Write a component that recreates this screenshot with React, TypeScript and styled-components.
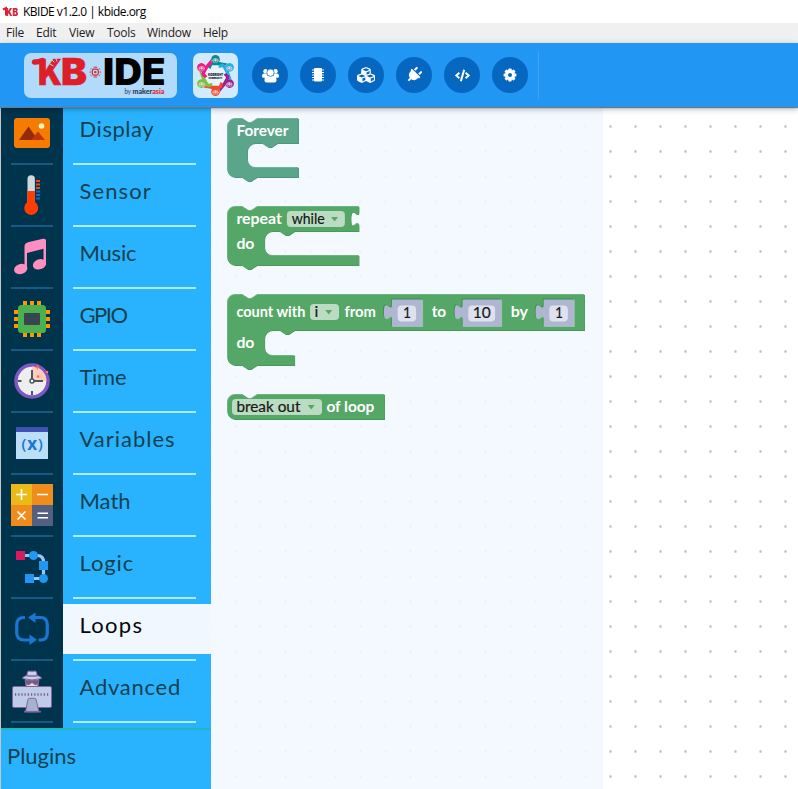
import React from 'react';
import styled, { createGlobalStyle } from 'styled-components';
import { FaCubes, FaPlug, FaCode } from 'react-icons/fa';

const GlobalStyle = createGlobalStyle`
  * { box-sizing: border-box; }
  body { margin: 0; background: #fff; overflow: hidden; }
  svg { display: block; overflow: visible; }
  svg text { white-space: pre; }
`;

const Window = styled.div`
  width: 798px;
  height: 789px;
  display: flex;
  flex-direction: column;
  font-family: Lato, sans-serif;
`;

const TitleBar = styled.div`
  flex: none;
  height: 23px;
  display: flex;
  align-items: center;
  gap: 5px;
  padding: 1px 0 0 3px;
  background: #fff;
  color: #000;
`;

const MenuBar = styled.nav`
  flex: none;
  height: 20px;
  display: grid;
  grid-template-columns: 30px 33px 38px 40px 56px 40px;
  align-items: center;
  padding-left: 6px;
  background: #f0f0f0;
  color: #222;
`;

const UiText = styled.span<{ $spacing?: number }>`
  font: 12px/18px 'Open Sans', 'Noto Sans', sans-serif;
  letter-spacing: ${p => p.$spacing ?? 0}px;
  white-space: nowrap;
`;

const Header = styled.header`
  flex: none;
  position: relative;
  z-index: 1;
  height: 64px;
  display: flex;
  align-items: center;
  padding-left: 24px;
  background: #2196f3;
  box-shadow: 0 1px 1px rgba(0, 0, 0, 0.42), 0 2px 6px rgba(0, 0, 0, 0.3);
`;

const LogoPlate = styled.div<{ $width: number; $alpha: number }>`
  width: ${p => p.$width}px;
  height: 45px;
  margin-right: 16px;
  border-radius: 7px;
  background: rgba(255, 255, 255, ${p => p.$alpha});
`;

const Tools = styled.div`
  display: flex;
  gap: 12px;
  margin-left: -2px;
`;

const ToolButton = styled.button`
  width: 36px;
  height: 36px;
  padding: 0;
  border: 0;
  border-radius: 50%;
  display: grid;
  place-items: center;
  background: #0567bf;
  color: #fff;
`;

const HeaderDivider = styled.div`
  width: 1px;
  height: 48px;
  margin-left: 10px;
  background: #46a2ef;
`;

const Body = styled.div`
  flex: 1;
  min-height: 0;
  display: flex;
  padding-top: 1px;
  border-left: 1px solid #c4c6c8;
`;

const Sidebar = styled.aside`
  width: 210px;
  display: flex;
  flex-direction: column;
  background: #29b3ff;
`;

const Category = styled.div`
  height: 62px;
  display: flex;
`;

const IconCell = styled.div`
  width: 62px;
  background: #00344d;
  display: flex;
  flex-direction: column;
  align-items: center;
`;

const IconHolder = styled.div`
  height: 55px;
  width: 62px;
  padding-top: 4px;
  display: flex;
  justify-content: center;
`;

const IconRule = styled.div`
  width: 42px;
  height: 2px;
  background: #165a83;
`;

const LabelCell = styled.div`
  flex: 1;
`;

const Label = styled.div<{ $active?: boolean; $spacing: number }>`
  height: 50px;
  padding: 5px 0 0 16.5px;
  font-size: 22px;
  line-height: 32px;
  white-space: nowrap;
  letter-spacing: ${p => p.$spacing}px;
  color: ${p => (p.$active ? '#05080b' : '#15414f')};
  background: ${p => (p.$active ? '#f0f7ff' : 'transparent')};
`;

const LabelRule = styled.div`
  width: 123px;
  height: 2px;
  margin: 5px 0 0 10px;
  background: #b0ecff;
`;

const Plugins = styled.div`
  flex: 1;
  border-top: 2px solid #24b6bf;
  padding: 10px 0 0 6px;
  font-size: 22px;
  line-height: 32px;
  color: #15414f;
`;

const Workspace = styled.main`
  flex: 1;
  display: flex;
  background-color: #fff;
  background-image: radial-gradient(ellipse 1.7px 2.1px at 12.5px 12.5px, #bcbcbc 0, #d4d4d4 55%, transparent 100%);
  background-size: 25px 25px;
  background-position: 12px 6px;
`;

const Flyout = styled.div`
  width: 392px;
  padding: 10px 0 0 16px;
  display: flex;
  flex-direction: column;
  gap: 24px;
  background: rgba(242, 247, 255, 0.86);
`;

const BlockSvg = styled.svg`
  flex: none;
  overflow: visible;
  font-family: Lato, sans-serif;
`;

const GREEN = '#55a767';
const TEAL = '#5ba58b';

type TxtProps = { x: number; y: number; w: number; children: string; dark?: boolean; size?: number };
const Txt = ({ x, y, w, children, dark, size = 14.5 }: TxtProps) => (
  <text x={x} y={y} textLength={w} lengthAdjust="spacingAndGlyphs" fontSize={size}
    fontWeight={dark ? 400 : 700} fill={dark ? '#151a18' : '#fff'}
    stroke={dark ? '#151a18' : 'none'} strokeWidth={dark ? 0.2 : 0}>
    {children}
  </text>
);

const Body3D = ({ d, fill, light, dark }: { d: string; fill: string; light: string; dark: string }) => (
  <>
    <path d={d} fill={dark} transform="translate(.5 .5)" />
    <path d={d} fill={light} transform="translate(-.4 -.4)" />
    <path d={d} fill={fill} transform="translate(.1 .2)" />
  </>
);

const Green = ({ d }: { d: string }) => <Body3D d={d} fill={GREEN} light="#88c295" dark="#3c8a4e" />;

const Dropdown = ({ x, y, w, arrow }: { x: number; y: number; w: number; arrow: number }) => (
  <>
    <rect x={x} y={y} width={w} height={16} rx={4} fill="#bbdcc2" />
    <path d={`M${arrow} ${y + 6}h7l-3.5 4.6z`} fill={GREEN} />
  </>
);

const NumberBlock = ({ x, w, text, tx, tw }: { x: number; w: number; text: string; tx: number; tw: number }) => {
  const d = `M${x} 5H${x + w}V32H${x}V25c0-10-8 8-8-7.5s8 2.5 8-7.5z`;
  return (
    <>
      <path d={d} fill="#3c8a4e" transform="translate(-.8 -.8)" />
      <path d={d} fill="#91c79c" transform="translate(.7 .7)" />
      <path d={d} fill="#afb6d2" />
      <rect x={x + 5.7} y={11} width={w - 12} height={16} rx={4} fill="#dfe2ee" />
      <Txt x={tx} y={23.6} w={tw} dark>{text}</Txt>
    </>
  );
};

const NOTCH_TOP = 'M0 8A8 8 0 0 1 8 0H15l6 4h3l6-4';
const FOOT = 'H29.5l-6 4h-3l-6-4H8a8 8 0 0 1-8-8z';
const mouth = (x: number, h: number) => `H${x + 30}l-6 4h-3l-6-4h-7a8 8 0 0 0-8 8v${h - 16}a8 8 0 0 0 8 8`;

const ForeverBlock = () => (
  <BlockSvg width={72} height={64}>
    <g transform="translate(.4 .4)">
      <Body3D fill={TEAL} light="#8cc0ae" dark="#3f8870"
        d={`${NOTCH_TOP}H71V25${mouth(20, 24)}H71V59${FOOT}`} />
      <Txt x={9} y={17.6} w={52}>Forever</Txt>
    </g>
  </BlockSvg>
);

const RepeatBlock = () => (
  <BlockSvg width={133} height={64}>
    <g transform="translate(.4 .4)">
      <Green d={`${NOTCH_TOP}H131.5v5c0 10-8-8-8 7.5s8-2.5 8 7.5V25${mouth(37.2, 24)}H131.5V59${FOOT}`} />
      <Txt x={9} y={17.6} w={45.5}>repeat</Txt>
      <Dropdown x={59.5} y={4.6} w={58} arrow={103.7} />
      <Txt x={64.3} y={17.6} w={33} dark>while</Txt>
      <Txt x={9} y={42.6} w={18}>do</Txt>
    </g>
  </BlockSvg>
);

const CountBlock = () => (
  <BlockSvg width={358} height={76}>
    <g transform="translate(.4 .4)">
      <Green d={`${NOTCH_TOP}H357V36${mouth(37.2, 25)}H67.2V71${FOOT}`} />
      <Txt x={9} y={22.9} w={69}>count with</Txt>
      <Dropdown x={82.6} y={9.6} w={29} arrow={97.8} />
      <Txt x={87.2} y={22.9} w={3.8} dark>i</Txt>
      <Txt x={117} y={22.9} w={31.5}>from</Txt>
      <NumberBlock x={164.5} w={30.5} text="1" tx={175.5} tw={8} />
      <Txt x={204.3} y={22.9} w={14.5}>to</Txt>
      <NumberBlock x={235.2} w={38.8} text="10" tx={245.3} tw={18} />
      <Txt x={283.3} y={22.9} w={17.3}>by</Txt>
      <NumberBlock x={316.2} w={30.5} text="1" tx={327.5} tw={8} />
      <Txt x={9} y={53.9} w={18}>do</Txt>
    </g>
  </BlockSvg>
);

const BreakBlock = () => (
  <BlockSvg width={158} height={26}>
    <g transform="translate(.4 .4)">
      <Green d={`${NOTCH_TOP}H157V25H8a8 8 0 0 1-8-8z`} />
      <Dropdown x={4.6} y={4.6} w={90} arrow={80.3} />
      <Txt x={9} y={17.6} w={64} dark>break out</Txt>
      <Txt x={99} y={17.6} w={48}>of loop</Txt>
    </g>
  </BlockSvg>
);

const AppIcon = () => (
  <svg width="15" height="12" fill="#d8232f" fontFamily="Inter, sans-serif" fontWeight="900" fontSize="10">
    <path d="M0 3.5L3 2V9.5" fill="none" stroke="#d8232f" strokeWidth="2" />
    <text x="3" y="9.5" textLength="12" lengthAdjust="spacingAndGlyphs">KB</text>
  </svg>
);

const KbLogo = () => (
  <svg width="153" height="45" fontFamily="Inter, sans-serif" fontWeight="900">
    <g fill="#de1f2a" stroke="#de1f2a">
      <path d="M10.500 9q4 .3 8-1.500v21.500" fill="none" strokeWidth="5.500" strokeLinejoin="round" strokeLinecap="round" />
      <text x="14" y="31.500" fontSize="36" strokeWidth=".4" textLength="24" lengthAdjust="spacingAndGlyphs">K</text>
      <text x="37" y="31.500" fontSize="36.500" strokeWidth=".4" textLength="26" lengthAdjust="spacingAndGlyphs">B</text>
    </g>
    <path d="M27.500 6.500l3 3m1-5l1.500 4m-7 2.500l3.500 2" stroke="#b3dbfb" strokeWidth="1" />
    <g fill="none" stroke="#de1f2a">
      <rect x="68.300" y="16.100" width="6" height="6" rx="1.800" strokeWidth="1.200" />
      <path d="M65.500 19.100h1.500m8.600 0h1.500M69.500 14.200h3.600M69.500 24h3.600" strokeWidth=".9" />
      <path d="M66.500 16.500l1-1.500M76 16.500l-1-1.500M66.500 21.700l1 1.500M76 21.700l-1 1.500" strokeWidth=".7" />
    </g>
    <circle cx="71.300" cy="19.100" r="1.200" fill="#de1f2a" />
    <text x="79" y="31.500" fontSize="36.500" textLength="62.500" lengthAdjust="spacingAndGlyphs">IDE</text>
    <g fontFamily="Lato, sans-serif" fontSize="7.500" fill="#253b55">
      <text x="100.500" y="41" fontWeight="400" textLength="6.500" lengthAdjust="spacingAndGlyphs">by</text>
      <text x="108.500" y="41" textLength="32" lengthAdjust="spacingAndGlyphs">
        maker<tspan fill="#de1f2a">asia</tspan>
      </text>
    </g>
  </svg>
);

const PEOPLE: [number, string][] = [
  [0, '#0b8793'], [60, '#2aaee2'], [120, '#9b2191'], [180, '#f0482c'], [240, '#7cc142'], [300, '#ee1a86'],
];

const CommunityLogo = () => (
  <svg width="45" height="45">
    <circle cx="22.500" cy="22.500" r="11" fill="#e7f3fb" />
    {PEOPLE.map(([angle, color]) => (
      <g key={angle} transform={`translate(22.500 22.500) rotate(${angle})`}>
        <path d="M-6.500-12.500Q0-15 6-13L12-12 8-8.500 5-10.200H-3.500L-5-6.500-7.500-8z" fill={color} />
        <circle cy="-16.300" r="4.300" fill={color} />
        <g transform={`translate(0 -16) rotate(${-angle})`}>
          <ellipse cy=".9" rx="3" ry="2.200" fill="#f3e3dc" opacity=".85" />
          <path d="M-2.200 1.500Q0 3.500 2.200 1.500M-2 .3h1.200m1.600 0H2" stroke={color} strokeWidth=".9" fill="none" />
        </g>
      </g>
    ))}
    <g fontFamily="Inter, sans-serif" fontWeight="900" fill="#17212b">
      <text x="15" y="22.500" fontSize="4" textLength="15" lengthAdjust="spacingAndGlyphs">KIDBRIGHT</text>
      <text x="15.500" y="25.600" fontSize="2.600" textLength="14" lengthAdjust="spacingAndGlyphs">COMMUNITY</text>
    </g>
  </svg>
);

const UsersGlyph = () => (
  <svg width="17" height="15" fill="#fff">
    <circle cx="3.500" cy="3.200" r="2.200" />
    <circle cx="13.500" cy="3.200" r="2.200" />
    <path d="M0 8.500Q0 5.500 2 5.500h3v4.300H1.500Q0 9.800 0 8.500zM17 8.500q0-3-2-3h-3v4.300h3.500q1.500 0 1.500-1.300z" />
    <path d="M2.500 12.500Q2.500 7.500 5.500 7.500h6q3 0 3 5 0 2-2 2h-8q-2 0-2-2z" />
    <circle cx="8.500" cy="4.700" r="3.700" stroke="#0567bf" strokeWidth=".7" />
  </svg>
);

const ChipGlyph = () => (
  <svg width="14" height="14" fill="#fff">
    <rect x="3" y="0" width="8" height="13.500" rx="1" />
    <path d="M1 2h12M1 4.500h12M1 7h12M1 9.500h12M1 12h12" stroke="#fff" strokeWidth="1" />
  </svg>
);

const PlugGlyph = styled(FaPlug)`
  transform: rotate(45deg);
`;

const GearGlyph = () => (
  <svg width="14" height="14" viewBox="-7 -7 14 14">
    <g fill="#fff">
      <circle r="5" />
      {[0, 45, 90, 135].map(a => (
        <rect key={a} x="-1.600" y="-6.400" width="3.200" height="12.800" rx=".7" transform={`rotate(${a})`} />
      ))}
    </g>
    <circle r="2" fill="#0567bf" />
  </svg>
);

const DisplayIcon = () => (
  <svg width="42" height="42">
    <rect x="3" y="6" width="36" height="30" rx="3" fill="#f57c00" />
    <circle cx="30.500" cy="14" r="2.800" fill="#fff6c4" />
    <path d="M17.500 14.500L27 28H8z" fill="#942a09" />
    <path d="M27 19.500L34 28H20z" fill="#bf360c" />
  </svg>
);

const SensorIcon = () => (
  <svg width="42" height="42">
    <path d="M16.500 30V5a3.700 3.700 0 0 1 7.400 0v25z" fill="#cfd8dc" />
    <path d="M16.500 17h7.400v11a7 7 0 1 1-7.400 0z" fill="#ff3d00" />
    <path d="M25 7h4M25 10.500h4M25 14h4" stroke="#e64a19" strokeWidth="2" />
    <path d="M25 17.500h4M25 21h4M25 24.500h4" stroke="#1565c0" strokeWidth="2" />
  </svg>
);

const MusicIcon = () => (
  <svg width="42" height="42">
    <g fill="#ff8fc0" transform="translate(0 1.300)">
      <ellipse cx="9.700" cy="31.700" rx="6.800" ry="5" transform="rotate(-18 9.700 31.700)" />
      <ellipse cx="28.500" cy="27" rx="6.800" ry="5" transform="rotate(-18 28.500 27)" />
      <path d="M13.500 9Q13.500 6 17 5L32 1.500q3-.7 3 2V27h-2.500V11.500L16 15.800V31h-2.500z" />
    </g>
  </svg>
);

const GpioIcon = () => (
  <svg width="42" height="42">
    <path d="M14 3v36M21 3v36M28 3v36M3 14h36M3 21h36M3 28h36" stroke="#ff9800" strokeWidth="4" />
    <rect x="7" y="7" width="28" height="28" rx="3.500" fill="#4caf50" />
    <rect x="13" y="15" width="16" height="12" rx="1" fill="#37474f" />
  </svg>
);

const TimeIcon = () => (
  <svg width="42" height="42">
    <circle cx="21" cy="21" r="16" fill="#eee" stroke="#7e57c2" strokeWidth="3.500" />
    <path d="M21 21V6.500A14.500 14.500 0 0 1 35.500 21z" fill="#ffccbc" />
    <path d="M21 19V10M23 21h9M21 31v4M7 21h3.500" stroke="#455a64" strokeWidth="2" />
    <circle cx="21" cy="21" r="2" fill="#fff" stroke="#455a64" strokeWidth="1.500" />
    <circle cx="27" cy="16.500" r="1.300" fill="#ff7058" />
    <circle cx="36" cy="12" r="1.300" fill="#ff7058" />
    <path d="M26.500 4.500l.8 2 2 .8-2 .8-.8 2-.8-2-2-.8 2-.8z" fill="#ff7058" />
  </svg>
);

const VariablesIcon = () => (
  <svg width="42" height="42" fontFamily="Open Sans, sans-serif">
    <rect x="5" y="5" width="32" height="32" fill="#bbdefb" />
    <rect x="5" y="5" width="32" height="5" fill="#3f51b5" />
    <g fill="#1976d2" fontWeight="600" fontSize="15">
      <text x="10.500" y="27">(</text>
      <text x="16.200" y="27.600" fontSize="17" fontWeight="700">x</text>
      <text x="27" y="27">)</text>
    </g>
  </svg>
);

const MathIcon = () => (
  <svg width="42" height="42">
    <path d="M0 0h21v21H0z" fill="#ebba16" />
    <path d="M21 0h21v21H21zM0 21h21v21H0z" fill="#f08c1b" />
    <path d="M21 21h21v21H21z" fill="#556080" />
    <path d="M10.500 5v11M5 10.500h11M26 10.500h11M6.500 27.500l8 8M14.500 27.500l-8 8M26.500 29.300h10.500M26.500 33.700h10.500" stroke="#fff" strokeWidth="1.600" />
  </svg>
);

const LogicIcon = () => (
  <svg width="42" height="42">
    <path d="M12 9.500h14q6.500 0 6.500 6.500v16.500H18" fill="none" stroke="#90caf9" strokeWidth="3.200" />
    <rect x="5" y="5" width="9" height="9" fill="#d81b60" />
    <g fill="#2196f3">
      <circle cx="22.500" cy="9.500" r="4.500" />
      <rect x="28" y="15" width="9" height="9" />
      <circle cx="32.500" cy="32.500" r="4.500" />
      <rect x="14" y="28" width="9" height="9" />
    </g>
  </svg>
);

const LoopsIcon = () => (
  <svg width="42" height="42">
    <g fill="none" stroke="#1976d2" strokeWidth="3.200">
      <path d="M14 9.500h-1Q5.700 9.500 5.700 17v7.500Q5.700 32 13 32h7" />
      <path d="M22 9.500h7.500Q36.300 9.500 36.300 17v7.500Q36.300 32 30 32h-2.500" />
    </g>
    <path d="M24.500 4.500v10.500L17 9.500zM18.500 26.500V37l7.500-5.300z" fill="#1976d2" />
  </svg>
);

const AdvancedIcon = () => (
  <svg width="42" height="42">
    <g stroke="#85639e" strokeWidth="1">
      <path d="M14.500 9h13v5q-1 5-6.500 5t-6.500-5z" fill="#f0d2c8" />
      <path d="M14 10.500h14l-1 3.500q-2 2-5.500-1l-.5-1-.5 1q-3.500 3-5.500 1z" fill="#65627b" />
      <path d="M16 5.500Q16 .5 18.500 1.200h5q2.500-.7 2.500 4.300 4.500 1 4.500 3-9.500 3-19 0 0-2 4.500-3z" fill="#c7d0e8" />
      <path d="M16 6h10" strokeWidth="1.500" />
      <rect x="1.500" y="16.500" width="39" height="21" rx="1.500" fill="#bfcce7" />
      <path d="M17 29q.3-1 1.500-1h5q1.200 0 1.500 1l3 12.500H14.500z" transform="translate(0 .3)" fill="#a4b3cc" />
      <path d="M13 41.700h17" strokeWidth="1.500" />
    </g>
    <path d="M4 24.500h35" stroke="#735a91" strokeWidth="2.600" strokeDasharray="1.200 2" />
  </svg>
);

const CATEGORIES: { name: string; Icon: React.FC; spacing: number }[] = [
  { name: 'Display', Icon: DisplayIcon, spacing: 0.55 },
  { name: 'Sensor', Icon: SensorIcon, spacing: 1.1 },
  { name: 'Music', Icon: MusicIcon, spacing: -0.2 },
  { name: 'GPIO', Icon: GpioIcon, spacing: -1.5 },
  { name: 'Time', Icon: TimeIcon, spacing: -0.3 },
  { name: 'Variables', Icon: VariablesIcon, spacing: 1 },
  { name: 'Math', Icon: MathIcon, spacing: 0 },
  { name: 'Logic', Icon: LogicIcon, spacing: 0.9 },
  { name: 'Loops', Icon: LoopsIcon, spacing: 1.3 },
  { name: 'Advanced', Icon: AdvancedIcon, spacing: 0.75 },
];

const MENUS = ['File', 'Edit', 'View', 'Tools', 'Window', 'Help'];

export default function App() {
  return (
    <Window>
      <GlobalStyle />
      <TitleBar>
        <AppIcon />
        <UiText $spacing={-0.52}>KBIDE v1.2.0 | kbide.org</UiText>
      </TitleBar>
      <MenuBar>
        {MENUS.map(m => <UiText key={m} $spacing={-0.25}>{m}</UiText>)}
      </MenuBar>
      <Header>
        <LogoPlate $width={153} $alpha={0.65}><KbLogo /></LogoPlate>
        <LogoPlate $width={45} $alpha={0.8}><CommunityLogo /></LogoPlate>
        <Tools>
          <ToolButton><UsersGlyph /></ToolButton>
          <ToolButton><ChipGlyph /></ToolButton>
          <ToolButton><FaCubes size={18} /></ToolButton>
          <ToolButton><PlugGlyph size={16} /></ToolButton>
          <ToolButton><FaCode size={15} /></ToolButton>
          <ToolButton><GearGlyph /></ToolButton>
        </Tools>
        <HeaderDivider />
      </Header>
      <Body>
        <Sidebar>
          {CATEGORIES.map(({ name, Icon, spacing }) => (
            <Category key={name}>
              <IconCell>
                <IconHolder><Icon /></IconHolder>
                <IconRule />
              </IconCell>
              <LabelCell>
                <Label $active={name === 'Loops'} $spacing={spacing}>{name}</Label>
                <LabelRule />
              </LabelCell>
            </Category>
          ))}
          <Plugins>Plugins</Plugins>
        </Sidebar>
        <Workspace>
          <Flyout>
            <ForeverBlock />
            <RepeatBlock />
            <CountBlock />
            <BreakBlock />
          </Flyout>
        </Workspace>
      </Body>
    </Window>
  );
}
